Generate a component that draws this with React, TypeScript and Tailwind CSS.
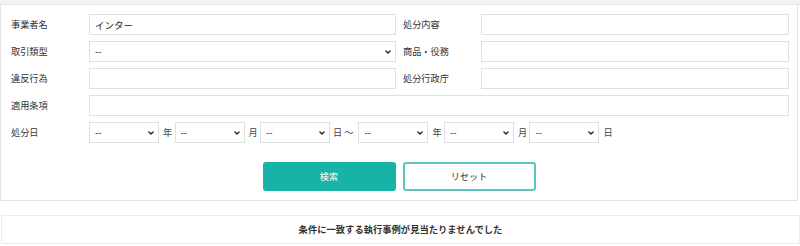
import React from 'react';

const font = { fontFamily: '"Noto Sans CJK JP", "Noto Sans", sans-serif' };

const Chevron: React.FC = () => (
    <svg viewBox="0 0 10 10" className="pointer-events-none absolute right-[5px] top-1/2 h-[6px] w-[6px] -translate-y-1/2">
        <path d="M1.5 3.2 L5 6.8 L8.5 3.2" fill="none" stroke="#222" strokeWidth="2.2" strokeLinecap="round" strokeLinejoin="round" />
    </svg>
);

const TextInput: React.FC<{ value?: string; className?: string }> = ({ value = '', className = '' }) => (
    <input
        type="text"
        defaultValue={value}
        className={`block h-[21px] shrink-0 border border-[#e0e0e0] bg-white px-[5px] text-[9.5px] leading-none text-[#222] outline-none ${className}`}
    />
);

const Select: React.FC<{ className?: string }> = ({ className = '' }) => (
    <div className={`relative h-[21px] shrink-0 ${className}`}>
        <select className="block h-full w-full appearance-none border border-[#e0e0e0] bg-white pl-[5px] text-[9.5px] leading-none text-[#222] outline-none">
            <option>--</option>
        </select>
        <Chevron />
    </div>
);

const Label: React.FC<{ children: React.ReactNode; className?: string }> = ({ children, className = '' }) => (
    <div className={`w-[78px] shrink-0 text-[9.2px] leading-none text-[#333] ${className}`}>{children}</div>
);

const Unit: React.FC<{ children: React.ReactNode; className?: string }> = ({ children, className = '' }) => (
    <span className={`block shrink-0 text-[9.2px] leading-none text-[#444] ${className}`}>{children}</span>
);

const DateUnit: React.FC<{ unit: string }> = ({ unit }) => (
    <>
        <Select className="w-[70px]" />
        <Unit className="ml-[4px] w-[11.5px]">{unit}</Unit>
    </>
);

const App: React.FC = () => {
    return (
        <div className="h-[246px] w-[800px] overflow-hidden bg-white" style={font}>
            <div className="h-[5px] border-b border-[#e4e4e4] bg-[#f3f3f3]" />
            <div className="w-[798px] border border-t-0 border-[#e4e4e4] pb-[9px] pl-[10px] pr-[8px] pt-[9px]">
                <div className="flex flex-col gap-[6px]">
                    <div className="flex h-[21px] items-center">
                        <Label>事業者名</Label>
                        <TextInput value="インター" className="w-[307px]" />
                        <Label className="ml-[7px]">処分内容</Label>
                        <TextInput className="w-[308px]" />
                    </div>
                    <div className="flex h-[21px] items-center">
                        <Label>取引類型</Label>
                        <Select className="w-[307px]" />
                        <Label className="ml-[7px]">商品・役務</Label>
                        <TextInput className="w-[308px]" />
                    </div>
                    <div className="flex h-[21px] items-center">
                        <Label>違反行為</Label>
                        <TextInput className="w-[307px]" />
                        <Label className="ml-[7px]">処分行政庁</Label>
                        <TextInput className="w-[308px]" />
                    </div>
                    <div className="flex h-[21px] items-center">
                        <Label>適用条項</Label>
                        <TextInput className="w-[700px]" />
                    </div>
                    <div className="flex h-[21px] items-center">
                        <Label>処分日</Label>
                        <DateUnit unit="年" />
                        <DateUnit unit="月" />
                        <Select className="w-[70px]" />
                        <Unit className="ml-[3px] mr-[5px]">日 〜</Unit>
                        <DateUnit unit="年" />
                        <DateUnit unit="月" />
                        <Select className="w-[70px]" />
                        <Unit className="ml-[4px]">日</Unit>
                    </div>
                </div>
                <div className="mt-[19px] flex justify-center gap-[7px] pr-[2px]">
                    <button className="h-[29px] w-[133px] rounded-[3px] bg-[#17b3a8] text-[9.2px] text-white">検索</button>
                    <button className="h-[29px] w-[133px] rounded-[3px] border-2 border-[#5cc5bf] bg-white text-[9.2px] text-[#333]">リセット</button>
                </div>
            </div>
            <div className="ml-[1px] mt-[14px] flex h-[29px] w-[799px] items-center justify-center border border-[#ececec] text-[9.3px] font-bold text-[#333]">
                条件に一致する執行事例が見当たりませんでした
            </div>
        </div>
    );
};

export default App;
